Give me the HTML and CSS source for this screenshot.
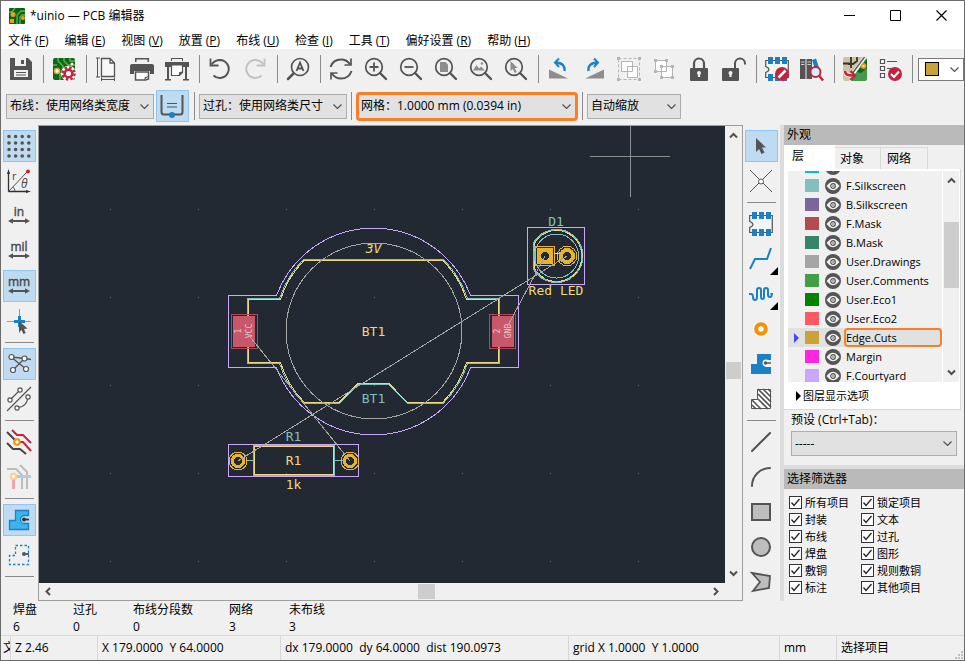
FILE: index.html
```html
<!DOCTYPE html>
<html lang="zh-CN">
<head>
<meta charset="utf-8">
<title>*uinio — PCB 编辑器</title>
<link rel="stylesheet" href="styles.css">
</head>
<body>
<svg class="defs" aria-hidden="true">
  <symbol id="lens" viewBox="0 0 24 24"><circle cx="10" cy="10" r="8.3" fill="none" stroke="#545454" stroke-width="1.7"/><path d="M16 16l6 6" stroke="#545454" stroke-width="2.4" stroke-linecap="round"/></symbol>
  <symbol id="arrows" viewBox="0 0 24 24"><path d="M4 17h16" stroke="#545454" stroke-width="2"/><path d="M1 17l5-2.800v5.600zM23 17l-5-2.800v5.600z" fill="#545454"/></symbol>
  <symbol id="footprint" viewBox="0 0 24 24"><path d="M.7 3.5h22.6v17H.7v-5q3.200-1.200 3.200-3t-3.200-3z" fill="#f4f4f4" stroke="#545454" stroke-width="1.200"/><path d="M3 0h5v7H3zM10 0h5v7h-5zM17 0h5v7h-5zM3 17h5v7H3zM10 17h5v7h-5zM17 17h5v7h-5z" fill="#1a81c4"/></symbol>
  <symbol id="cursor" viewBox="0 0 24 24"><path d="M7 4v14l3-3 2.500 5 3-1.500-2.500-5H17z" fill="#545454"/></symbol>
  <symbol id="eye" viewBox="0 0 16 16"><circle cx="8" cy="8" r="8" fill="#545454"/><path d="M1.500 8Q8 -.5 14.500 8 8 16.500 1.500 8z" fill="#f0f0f0"/><circle cx="8" cy="8" r="2.300" fill="#f0f0f0" stroke="#545454" stroke-width="1.200"/><circle cx="8" cy="8" r=".8" fill="#545454"/></symbol>
  <symbol id="up" viewBox="0 0 9 9"><path d="M1 6.500L4.500 3 8 6.500" fill="none" stroke="#505050" stroke-width="2"/></symbol>
  <symbol id="down" viewBox="0 0 9 9"><path d="M1 2.500L4.500 6 8 2.500" fill="none" stroke="#505050" stroke-width="2"/></symbol>
</svg>
<div class="window">
  <header class="titlebar">
    <svg class="app-icon" viewBox="0 0 16 16"><rect width="16" height="16" rx="1" fill="#09640f"/><path d="M0 4h3l3-4M16 3h-4L8 7v9M16 7h-3l-2 2v7" fill="none" stroke="#64ad54" stroke-width="1.300"/><circle cx="4" cy="6.500" r="2.500" fill="#f29b24"/><path d="M1 11h4v4H1z" fill="#f29b24"/><circle cx="14" cy="10" r="2" fill="#f29b24"/></svg>
    <h1>*uinio — PCB 编辑器</h1>
    <div class="win-controls">
      <button aria-label="最小化"><svg viewBox="0 0 11 11"><path d="M0 5.500h11" stroke="#000"/></svg></button>
      <button aria-label="最大化"><svg viewBox="0 0 11 11"><path d="M.5.5h10v10H.5z" fill="none" stroke="#000"/></svg></button>
      <button aria-label="关闭"><svg viewBox="0 0 11 11"><path d="M.5.5l10 10M10.500.5l-10 10" stroke="#000" stroke-width="1.200"/></svg></button>
    </div>
  </header>
  <nav class="menubar">
    <button>文件 (<u>F</u>)</button><button>编辑 (<u>E</u>)</button><button>视图 (<u>V</u>)</button><button>放置 (<u>P</u>)</button><button>布线 (<u>U</u>)</button><button>检查 (<u>I</u>)</button><button>工具 (<u>T</u>)</button><button>偏好设置 (<u>R</u>)</button><button>帮助 (<u>H</u>)</button>
  </nav>

  <div class="toolbar" role="toolbar">
    <button class="tool" aria-label="保存"><svg viewBox="0 0 24 24"><path d="M1 1h18l4 4v18H1z" fill="#545454"/><path d="M6 1h11v8H6zM5 13h14v7H5z" fill="#f0f0f0"/><path d="M12 3h3v4h-3z" fill="#545454"/><path d="M7 15.500h10M7 18h10" stroke="#545454"/></svg></button>
    <i class="sep"></i>
    <button class="tool" aria-label="电路板设置"><svg viewBox="0 0 24 24"><rect x="1" y="1" width="22" height="22" rx="2" fill="#0a6b12"/><path d="M6 1v3l5 5v5l-3 3v6M12 1v3l4 4h7M1 8h4M18 1v3h5" fill="none" stroke="#5fae56" stroke-width="1.500"/><circle cx="5" cy="14" r="2.500" fill="#fff" stroke="#e8a13c" stroke-width="1.500"/><circle cx="20" cy="7" r="1.500" fill="#fff"/><circle cx="16.500" cy="16.500" r="6.200" fill="none" stroke="#fff" stroke-width="3" /><circle cx="16.500" cy="16.500" r="6" fill="none" stroke="#c4233f" stroke-width="2.500" stroke-dasharray="2.500 2.210"/><circle cx="16.500" cy="16.500" r="3.800" fill="#fff" stroke="#c4233f" stroke-width="2.500"/></svg></button>
    <i class="sep"></i>
    <button class="tool" aria-label="页面设置"><svg viewBox="0 0 24 24"><path d="M6.500 1.500H15l4.500 4.500v13.500h-13zM15 1.500V6h4.500" fill="#f8f8f8" stroke="#545454" stroke-width="1.300"/><path d="M2.500 1v19M1 1h4M1 20h4M6 22.500h14M6.500 20.500v3.500M19.500 20.500v3.500" stroke="#545454" fill="none"/></svg></button>
    <button class="tool" aria-label="打印"><svg viewBox="0 0 24 24"><path d="M5 1h14v4H5zM2 7h20q2 0 2 2v8h-4v-3H4v3H0V9q0-2 2-2z" fill="#545454"/><path d="M5.500 15h13v7l-3 1h-10z" fill="#fff" stroke="#545454" stroke-width="1.500"/><path d="M6.500 2.500h11V5h-11z" fill="#f0f0f0"/><path d="M14 23l1-3 4-1z" fill="#545454"/></svg></button>
    <button class="tool" aria-label="绘图"><svg viewBox="0 0 24 24"><path d="M6 1h12v3H6zM0 5h24v5h-2v13h-2V10H4v13H2V10H0z" fill="#545454"/><path d="M0 22h6v1.500H0zM18 22h6v1.500h-6z" fill="#545454"/><path d="M6.500 8v10.500h8l3-3V8z" fill="#fff" stroke="#545454" stroke-width="1.200"/><path d="M13.500 19l.8-4 4-.5z" fill="#545454"/><path d="M7 2h10v2H7z" fill="#f0f0f0"/></svg></button>
    <i class="sep"></i>
    <button class="tool" aria-label="撤销"><svg viewBox="0 0 24 24"><path d="M3.500 7.500Q7 3 12 3a9 9 0 1 1-6.500 15.500" fill="none" stroke="#545454" stroke-width="2"/><path d="M2.500 1.500v7h8" fill="none" stroke="#545454" stroke-width="1.800"/></svg></button>
    <button class="tool" aria-label="重做"><svg viewBox="0 0 24 24"><path d="M20.500 7.500Q17 3 12 3a9 9 0 1 0 6.500 15.500" fill="none" stroke="#c1c1c1" stroke-width="2"/><path d="M21.500 1.500v7h-8" fill="none" stroke="#c1c1c1" stroke-width="1.800"/></svg></button>
    <i class="sep"></i>
    <button class="tool" aria-label="查找"><svg viewBox="0 0 24 24"><circle cx="14" cy="10" r="8.500" fill="none" stroke="#545454" stroke-width="1.700"/><path d="M7.500 16.500L2 22" stroke="#545454" stroke-width="2.500" stroke-linecap="round"/><path d="M10.500 14L14 5.500l3.500 8.500M11.500 11.500h5" stroke="#545454" stroke-width="1.800" fill="none"/></svg></button>
    <i class="sep"></i>
    <button class="tool" aria-label="刷新"><svg viewBox="0 0 24 24"><path d="M1.500 10Q4 2.500 12 2.500q6 0 9 5M22.500 14Q20 21.500 12 21.500q-6 0-9-5" fill="none" stroke="#545454" stroke-width="2"/><path d="M22 1.500V8h-6.500M2 22.500V16h6.500" fill="none" stroke="#545454" stroke-width="1.700"/></svg></button>
    <button class="tool" aria-label="放大"><svg viewBox="0 0 24 24"><use href="#lens"/><path d="M5.500 10h9M10 5.500v9" stroke="#545454" stroke-width="1.800"/></svg></button>
    <button class="tool" aria-label="缩小"><svg viewBox="0 0 24 24"><use href="#lens"/><path d="M5.500 10h9" stroke="#545454" stroke-width="1.800"/></svg></button>
    <button class="tool" aria-label="缩放到页面"><svg viewBox="0 0 24 24"><use href="#lens"/><path d="M6 5h5.500L14 7.500V15H6z" fill="#8d8d8d"/></svg></button>
    <button class="tool" aria-label="缩放到对象"><svg viewBox="0 0 24 24"><use href="#lens"/><path d="M4 13.500L7.500 8l2.500 3.500L12 9.500l4 4z" fill="#8d8d8d"/><circle cx="13" cy="6.500" r="1.300" fill="#8d8d8d"/></svg></button>
    <button class="tool" aria-label="缩放到选择"><svg viewBox="0 0 24 24"><use href="#lens"/><path d="M6.500 4v10l2.200-2 2 4 2-1-2-4h3z" fill="#8d8d8d"/></svg></button>
    <i class="sep"></i>
    <button class="tool" aria-label="逆时针旋转"><svg viewBox="0 0 24 24"><path d="M2 12.500L21 21.500H2z" fill="#8d8d8d"/><path d="M17.500 14q1-8-9-8.500" fill="none" stroke="#1a81c4" stroke-width="2.300"/><path d="M12 1.500L8 5.500l4 4.500" fill="none" stroke="#1a81c4" stroke-width="2"/></svg></button>
    <button class="tool" aria-label="顺时针旋转"><svg viewBox="0 0 24 24"><path d="M22 12.500L3 21.500h19z" fill="#8d8d8d"/><path d="M6.500 14q-1-8 9-8.500" fill="none" stroke="#1a81c4" stroke-width="2.300"/><path d="M12 1.500l4 4-4 4.500" fill="none" stroke="#1a81c4" stroke-width="2"/></svg></button>
    <button class="tool" aria-label="编组"><svg viewBox="0 0 24 24"><path d="M1.500 1.500h21v21h-21z" fill="none" stroke="#b5b5b5" stroke-dasharray="3 2"/><path d="M4.500 4.500h11v10h-11zM10.500 9.500h10v11h-10z" fill="#fff" stroke="#b5b5b5"/><path d="M0 0h3v3H0zM21 0h3v3h-3zM0 21h3v3H0zM21 21h3v3h-3z" fill="#b5b5b5"/></svg></button>
    <button class="tool" aria-label="取消编组"><svg viewBox="0 0 24 24"><path d="M3.500 3.500h11v11h-11zM9.500 9.500h11v11h-11z" fill="#fff" stroke="#b5b5b5"/><path d="M2 2h3v3H2zM13 2h3v3h-3zM2 13h3v3H2zM8 8h3v3H8zM19 8h3v3h-3zM8 19h3v3H8zM19 19h3v3h-3z" fill="#b5b5b5"/></svg></button>
    <button class="tool" aria-label="锁定"><svg viewBox="0 0 24 24"><path d="M7 12V6.500a5 5 0 0 1 10 0V12" fill="none" stroke="#545454" stroke-width="2.200"/><rect x="3" y="11" width="18" height="13" rx="1" fill="#545454"/><path d="M12 15v5" stroke="#f0f0f0" stroke-width="2.200"/><circle cx="12" cy="16" r="2" fill="#f0f0f0"/></svg></button>
    <button class="tool" aria-label="解锁"><svg viewBox="0 0 24 24"><path d="M13 12V6.500a5 5 0 0 1 10 0v1" fill="none" stroke="#545454" stroke-width="2"/><rect x="0" y="11" width="17" height="13" rx="1" fill="#545454"/><path d="M8.500 15v5" stroke="#f0f0f0" stroke-width="2.200"/><circle cx="8.500" cy="16" r="2" fill="#f0f0f0"/></svg></button>
    <i class="sep"></i>
    <button class="tool" aria-label="封装编辑器"><svg viewBox="0 0 24 24"><use href="#footprint"/><circle cx="17" cy="17" r="7" fill="#c4233f"/><path d="M13.500 20.500l7-7" stroke="#fff" stroke-width="2.500"/></svg></button>
    <button class="tool" aria-label="封装浏览器"><svg viewBox="0 0 24 24"><path d="M0 2h5.500v20H0zM6.500 2H12v20H6.500z" fill="#545454"/><path d="M12 3l4-1.500 4 12-4 2z" fill="#1a81c4"/><path d="M1 5h3.500M1 7.500h3.500M7.500 5H11M7.500 7.500H11" stroke="#ccc"/><circle cx="15.500" cy="15" r="5" fill="#d9edf8" stroke="#c4233f" stroke-width="2"/><path d="M19 18.500l4 5" stroke="#c4233f" stroke-width="2.500"/></svg></button>
    <i class="sep"></i>
    <button class="tool" aria-label="从原理图更新"><svg viewBox="0 0 24 24"><path d="M2 0h18L6 24H2q-2 0-2-2V2q0-2 2-2z" fill="#d0c3a3"/><path d="M21 0q3 0 3 3v19q0 2-2 2H8z" fill="#46994a"/><path d="M14 15L24 2v9l-6 5z" fill="#0b6817"/><path d="M22 0L9 18" stroke="#fff" stroke-width="3.500"/><path d="M21.500 0L9 17" stroke="#545454" stroke-width="1.300"/><path d="M0 6.500h7M8 0v11M5 7h5l4-3V0" fill="none" stroke="#333" stroke-width="1.800"/><circle cx="20.500" cy="9" r="2" fill="#fff" stroke="#ef9818" stroke-width="1.800"/><path d="M2 14q0 5 9 4.500" fill="none" stroke="#f5e9df" stroke-width="4.500"/><path d="M2 14q0 5 9 4.500" fill="none" stroke="#c4233f" stroke-width="2.500"/><path d="M7.500 14l4.500 4.500L7.500 23" fill="none" stroke="#c4233f" stroke-width="2.300"/></svg></button>
    <button class="tool" aria-label="设计规则检查"><svg viewBox="0 0 24 24"><path d="M2.500 2.500h4v4h-4zM2.500 9.500h4v4h-4zM2.500 16.500h4v4h-4z" fill="#fff" stroke="#545454" stroke-width="1.200"/><path d="M9 4.500h10M9 11.500h5" stroke="#545454" stroke-width="1.200"/><circle cx="17" cy="17" r="7" fill="#c4233f"/><path d="M13 17l3 3 5-5.500" fill="none" stroke="#fff" stroke-width="2"/></svg></button>
    <i class="sep"></i>
    <button class="layer-color" aria-label="当前层"><span></span><svg viewBox="0 0 9 9"><path d="M.5 2.500l4 4 4-4" fill="none" stroke="#505050" stroke-width="1.200"/></svg></button>
  </div>

  <div class="toolbar options" role="toolbar">
    <select class="combo wide" aria-label="布线宽度"><option>布线：使用网络类宽度</option></select>
    <button class="tool on" aria-label="自动布线宽度"><svg viewBox="0 0 24 24"><path d="M1.500 1v17q0 2.500 2.500 2.500h16q2.500 0 2.500-2.500V1" fill="none" stroke="#545454" stroke-width="2"/><path d="M7 9.500h10M7 13h10" stroke="#545454" stroke-width="1.200"/><circle cx="12" cy="21" r="3" fill="#1a81c4"/></svg></button>
    <i class="sep"></i>
    <select class="combo wide" aria-label="过孔尺寸"><option>过孔：使用网络类尺寸</option></select>
    <i class="sep"></i>
    <select class="combo grid-combo" aria-label="网格"><option>网格：1.0000 mm (0.0394 in)</option></select>
    <i class="sep"></i>
    <select class="combo narrow" aria-label="缩放"><option>自动缩放</option></select>
  </div>

  <main class="workspace">
    <div class="sidebar" role="toolbar">
      <button class="tool on" aria-label="显示网格"><svg viewBox="0 0 24 24"><path d="M2 2.500h22M2 9h22M2 15.500h22M2 22h22" stroke="#545454" stroke-width="3.600" stroke-linecap="round" stroke-dasharray="0 6.600"/></svg></button>
      <button class="tool" aria-label="极坐标"><svg viewBox="0 0 24 24"><path d="M1.500 22.500V3M1.500 22.500h19" stroke="#303030" stroke-width="1.300"/><path d="M1.500 0L0 5h3zM24 22.500L19 21v3z" fill="#303030"/><path d="M1.500 22.500L20 3M6 18q2 2 2 4" fill="none" stroke="#545454"/><circle cx="21" cy="2.500" r="2" fill="#c4233f"/><text x="5" y="11" class="ico-text">r</text><text x="14" y="19" class="ico-text theta">θ</text></svg></button>
      <button class="tool" aria-label="英寸"><svg viewBox="0 0 24 24"><use href="#arrows"/><text x="12" y="12" class="ico-text unit">in</text></svg></button>
      <button class="tool" aria-label="密耳"><svg viewBox="0 0 24 24"><use href="#arrows"/><text x="12" y="12" class="ico-text unit">mil</text></svg></button>
      <button class="tool on" aria-label="毫米"><svg viewBox="0 0 24 24"><use href="#arrows"/><text x="12" y="12" class="ico-text unit">mm</text></svg></button>
      <button class="tool" aria-label="全屏光标"><svg viewBox="0 0 24 24"><path d="M0 12.500h24M12.500 0v24" stroke="#999"/><path d="M7 12.500h11M12.500 7v11" stroke="#1a81c4" stroke-width="3"/><path d="M12 12v11l2.500-2 2 4 2.200-1-1.700-4 3.500-.5z" fill="#545454"/></svg></button>
      <i class="sep"></i>
      <button class="tool on" aria-label="显示飞线"><svg viewBox="0 0 24 24"><path d="M4 5l14 1.500L24 7.500M4 5l15 12M18 6L6 18" stroke="#545454" stroke-width="1.300"/><g fill="#fff" stroke="#545454" stroke-width="1.200"><circle cx="4.500" cy="5" r="2.500"/><circle cx="17.500" cy="6.500" r="2.500"/><circle cx="6" cy="18" r="2.500"/><circle cx="19" cy="17" r="2.500"/></g></svg></button>
      <button class="tool" aria-label="曲线飞线"><svg viewBox="0 0 24 24"><path d="M24 0L0 24M3 13L13 3M10 21q10-1 11-11" fill="none" stroke="#545454" stroke-width="1.200"/><g fill="#fff" stroke="#545454" stroke-width="1.200"><circle cx="3" cy="13" r="2.100"/><circle cx="13" cy="3" r="2.100"/><circle cx="10" cy="21" r="2.100"/><circle cx="21" cy="10" r="2.100"/></g></svg></button>
      <i class="sep"></i>
      <button class="tool" aria-label="高对比度"><svg viewBox="0 0 24 24"><path d="M0 2l9 9M0 13l6 6h7l6 5" fill="none" stroke="#444" stroke-width="2"/><path d="M5 0l5 5h6l8 8M10 12h6l8 9" fill="none" stroke="#c4233f" stroke-width="2"/><circle cx="10" cy="12" r="2.800" fill="#fff" stroke="#f39200" stroke-width="2"/></svg></button>
      <button class="tool" aria-label="网络高亮"><svg viewBox="0 0 24 24"><path d="M0 4h9l6 6v14M13 0l7 7v17" fill="none" stroke="#bdbdbd" stroke-width="2"/><path d="M7 11.500h17" stroke="#a9cfe8" stroke-width="3"/><path d="M6.500 13v11" stroke="#eba4b1" stroke-width="3"/><circle cx="6.500" cy="11.500" r="2.800" fill="#fff" stroke="#f9cd8e" stroke-width="2"/></svg></button>
      <i class="sep"></i>
      <button class="tool on" aria-label="显示敷铜"><svg viewBox="0 0 24 24"><path d="M8.500 2.500h13v5h-4a3.800 3.800 0 0 0 0 8h4v6h-19v-9h6z" fill="#3cb3ea" stroke="#1a81c4" stroke-width="1.300"/><path d="M16 11.500h6" stroke="#333" stroke-width="1.800"/><circle cx="17" cy="11.500" r="2" fill="#333"/></svg></button>
      <button class="tool" aria-label="敷铜轮廓"><svg viewBox="0 0 24 24"><path d="M8.500 2.500h13v19h-19v-9h6z" fill="none" stroke="#1a81c4" stroke-width="1.300" stroke-dasharray="2.500 2"/><path d="M16 11h6" stroke="#545454" stroke-width="1.800"/><circle cx="17" cy="11" r="2" fill="#545454"/></svg></button>
      <i class="sep"></i>
    </div>

    <div class="viewport">
      <svg class="board" viewBox="39 126 686 457" preserveAspectRatio="xMidYMid slice">
        <defs><pattern id="dots" x="22" y="121" width="88" height="88" patternUnits="userSpaceOnUse"><path d="M0 0h1v1H0z" fill="#666c74"/></pattern></defs>
        <rect x="39" y="126" width="686" height="457" fill="#222932"/>
        <rect x="39" y="126" width="686" height="457" fill="url(#dots)"/>
        <path d="M590 156.500h80M630.500 126v71" stroke="#8b8f92"/>
        <g fill="none">
          <path d="M228.500 295.500H276.500A103.500 103.500 0 0 1 470.500 295.500H518.500V367.500H470.500A103.500 103.500 0 0 1 276.500 367.500H228.500z" stroke="#c9a7fb"/>
          <path d="M303.500 259.500H443.500A100 100 0 0 1 467.500 298.500H499.500V363.500H467.500A100 100 0 0 1 443.500 403H407L388.500 384H358.500L340 403H303.500A100 100 0 0 1 279.500 363.500H247.500V298.500H279.500A100 100 0 0 1 303.500 259.500z" stroke="#7fc0bd"/>
          <path d="M304 260.500H443A99 99 0 0 1 466.500 299.500H498.500V362.500H466.500A99 99 0 0 1 443 402H407L388.500 383H358.500L339.500 402H304A99 99 0 0 1 280.500 362.500H248.500V299.500H280.500A99 99 0 0 1 304 260.500z" stroke="#f0d878"/>
          <circle cx="374" cy="331" r="88" stroke="#a6a6a6"/>
          <path d="M369 331.500h10" stroke="#00007a"/>
        </g>
        <g stroke="#a94c51" fill="none"><rect x="231.500" y="314.500" width="26" height="34"/><rect x="489.500" y="314.500" width="26" height="34"/></g>
        <g fill="#c9576c"><rect x="233" y="316" width="22" height="31"/><rect x="492" y="316" width="22" height="31"/></g>
        <g class="pad-text">
          <text transform="translate(241 331) rotate(-90)">1</text><text transform="translate(252 331) rotate(-90)">VCC</text>
          <text transform="translate(500 331) rotate(-90)">2</text><text transform="translate(511 331) rotate(-90)">GND</text>
        </g>
        <g fill="none">
          <rect x="527.500" y="227.500" width="57" height="57" stroke="#c9a7fb"/>
          <path d="M533.500 243.500A26 26 0 1 1 533.500 268.500z" stroke="#7fc0bd" stroke-width="2"/>
          <path d="M534.500 243.500A25.500 25.500 0 1 1 534.500 268.500z" stroke="#f0d878" stroke-dasharray="9 3"/>
          <circle cx="556.500" cy="256" r="22" stroke="#7fc0bd"/>
          <rect x="535.500" y="246.500" width="19" height="19" stroke="#e5b42c"/>
          <circle cx="567" cy="256" r="9.700" stroke="#e5b42c"/>
          <path d="M554 254l5-1v7" stroke="#f0d878"/>
        </g>
        <rect x="537" y="248" width="16" height="16" fill="#e5b42c"/><circle cx="567" cy="256" r="8" fill="#e5b42c"/>
        <g fill="#222932" stroke="#222932"><circle cx="545" cy="256" r="3.800"/><circle cx="567" cy="256" r="3.800"/></g>
        <g fill="none">
          <rect x="228.500" y="444.500" width="130" height="32" stroke="#c9a7fb"/>
          <path d="M246 460.500h8M335 460.500h8" stroke="#7fc0bd"/>
          <rect x="253.500" y="445.500" width="81" height="30" stroke="#7fc0bd"/>
          <rect x="254.500" y="446.500" width="79" height="28" stroke="#f0d878"/>
          <g stroke="#e5b42c"><circle cx="238" cy="461" r="9"/><circle cx="350" cy="461" r="9"/><g stroke-width="3"><circle cx="238" cy="461" r="5.700"/><circle cx="350" cy="461" r="5.700"/></g></g>
          <path d="M567 256L238 461M545 256L505 331M247 333L350 461" stroke="#a6a6a6"/>
        </g>
        <g class="silk">
          <text x="373.500" y="253" class="fab slanted">3V</text>
          <text x="373.500" y="336" class="fab">BT1</text>
          <text x="373.500" y="403">BT1</text>
          <text x="556" y="226">D1</text>
          <text x="556" y="295" class="fab">Red LED</text>
          <text x="293.500" y="441">R1</text>
          <text x="293.500" y="465" class="fab">R1</text>
          <text x="293.500" y="489" class="fab">1k</text>
        </g>
      </svg>
      <div class="vscroll"><svg class="chev"><use href="#up"/></svg><span class="track"><span class="thumb"></span></span><svg class="chev"><use href="#down"/></svg></div>
      <div class="hscroll"><svg class="chev" viewBox="0 0 9 9"><path d="M6 1L2.500 4.500 6 8" fill="none" stroke="#505050" stroke-width="2"/></svg><span class="track"><span class="thumb"></span></span><svg class="chev" viewBox="0 0 9 9"><path d="M3 1l3.500 3.500L3 8" fill="none" stroke="#505050" stroke-width="2"/></svg></div>
    </div>

    <div class="sidebar" role="toolbar">
      <button class="tool on" aria-label="选择"><svg viewBox="0 0 24 24"><use href="#cursor"/></svg></button>
      <button class="tool" aria-label="局部飞线"><svg viewBox="0 0 24 24"><path d="M1 1l22 22M23 1L1 23" stroke="#545454"/><circle cx="12" cy="12.500" r="2.500" fill="#fff" stroke="#545454"/></svg></button>
      <i class="sep"></i>
      <button class="tool" aria-label="添加封装"><svg viewBox="0 0 24 24"><use href="#footprint"/></svg></button>
      <button class="tool more" aria-label="布线"><svg viewBox="0 0 24 24"><path d="M1 22l5-10h12l4-11" fill="none" stroke="#1a81c4" stroke-width="2"/></svg></button>
      <button class="tool more" aria-label="调整长度"><svg viewBox="0 0 24 24"><path d="M0 12h2q2 0 2 3t2 3 2-3V8q0-2 2-2t2 2v7q0 2 1.500 2t1.500-2V8q0-2 2-2t2 2v5q0 2 2 2t1.500-3H24" fill="none" stroke="#1a81c4" stroke-width="2"/></svg></button>
      <button class="tool" aria-label="过孔"><svg viewBox="0 0 24 24"><circle cx="12" cy="12" r="4.800" fill="#fff" stroke="#f39200" stroke-width="4"/></svg></button>
      <button class="tool" aria-label="敷铜"><svg viewBox="0 0 24 24"><path d="M8 2h14v6h-4a3.500 3.500 0 0 0 0 7h4v7H2V12h6z" fill="#1a81c4"/><circle cx="17" cy="11" r="3.500" fill="#fff"/><circle cx="16.500" cy="11" r="1.700" fill="#545454"/><path d="M17 11h5" stroke="#545454" stroke-width="1.500"/></svg></button>
      <button class="tool" aria-label="规则区域"><svg viewBox="0 0 24 24"><path d="M8.500 2.500h13v19h-19v-9h6z" fill="#fff" stroke="#545454"/><path d="M9 2l13 13M14 2l8 8M9 7l13 13M9 12l10 10M3 13l9 9M3 18l4 4M19 2l3 3" stroke="#545454" stroke-width="1.700"/></svg></button>
      <i class="sep"></i>
      <button class="tool" aria-label="直线"><svg viewBox="0 0 24 24"><path d="M3 21L21 3" stroke="#545454" stroke-width="2" stroke-linecap="round"/></svg></button>
      <button class="tool" aria-label="圆弧"><svg viewBox="0 0 24 24"><path d="M3 21A18 18 0 0 1 21 3" fill="none" stroke="#545454" stroke-width="2" stroke-linecap="round"/></svg></button>
      <button class="tool" aria-label="矩形"><svg viewBox="0 0 24 24"><path d="M3 4h18v16H3z" fill="#bdbdbd" stroke="#545454" stroke-width="2"/></svg></button>
      <button class="tool" aria-label="圆"><svg viewBox="0 0 24 24"><circle cx="12" cy="12" r="9" fill="#bdbdbd" stroke="#545454" stroke-width="2"/></svg></button>
      <button class="tool" aria-label="多边形"><svg viewBox="0 0 24 24"><path d="M3 3l18 3-1 12-16 3 7-9z" fill="#bdbdbd" stroke="#545454" stroke-width="1.800"/></svg></button>
    </div>

    <aside class="panels">
      <h2>外观</h2>
      <div class="tabs" role="tablist"><button role="tab" class="active">层</button><button role="tab">对象</button><button role="tab">网络</button></div>
      <section class="layers">
        <div class="list-box">
          <ul>
            <li><i class="mark"></i><span class="swatch paste"></span><button aria-label="可见性"><svg><use href="#eye"/></svg></button></li>
            <li><i class="mark"></i><span class="swatch fsilk"></span><button aria-label="可见性"><svg><use href="#eye"/></svg></button><span>F.Silkscreen</span></li>
            <li><i class="mark"></i><span class="swatch bsilk"></span><button aria-label="可见性"><svg><use href="#eye"/></svg></button><span>B.Silkscreen</span></li>
            <li><i class="mark"></i><span class="swatch fmask"></span><button aria-label="可见性"><svg><use href="#eye"/></svg></button><span>F.Mask</span></li>
            <li><i class="mark"></i><span class="swatch bmask"></span><button aria-label="可见性"><svg><use href="#eye"/></svg></button><span>B.Mask</span></li>
            <li><i class="mark"></i><span class="swatch drawings"></span><button aria-label="可见性"><svg><use href="#eye"/></svg></button><span>User.Drawings</span></li>
            <li><i class="mark"></i><span class="swatch comments"></span><button aria-label="可见性"><svg><use href="#eye"/></svg></button><span>User.Comments</span></li>
            <li><i class="mark"></i><span class="swatch eco1"></span><button aria-label="可见性"><svg><use href="#eye"/></svg></button><span>User.Eco1</span></li>
            <li><i class="mark"></i><span class="swatch eco2"></span><button aria-label="可见性"><svg><use href="#eye"/></svg></button><span>User.Eco2</span></li>
            <li class="current"><i class="mark"></i><span class="swatch edge"></span><button aria-label="可见性"><svg><use href="#eye"/></svg></button><span class="name">Edge.Cuts</span></li>
            <li><i class="mark"></i><span class="swatch margin"></span><button aria-label="可见性"><svg><use href="#eye"/></svg></button><span>Margin</span></li>
            <li><i class="mark"></i><span class="swatch court"></span><button aria-label="可见性"><svg><use href="#eye"/></svg></button><span>F.Courtyard</span></li>
          </ul>
          <div class="vscroll"><svg class="chev"><use href="#up"/></svg><span class="track"><span class="thumb"></span></span><svg class="chev"><use href="#down"/></svg></div>
        </div>
        <button class="disclosure"><i></i>图层显示选项</button>
      </section>
      <div class="preset"><label for="preset">预设 (Ctrl+Tab)：</label><select id="preset" class="combo"><option>-----</option></select></div>
      <h2>选择筛选器</h2>
      <div class="filters">
        <label><input type="checkbox" checked>所有项目</label><label><input type="checkbox" checked>锁定项目</label>
        <label><input type="checkbox" checked>封装</label><label><input type="checkbox" checked>文本</label>
        <label><input type="checkbox" checked>布线</label><label><input type="checkbox" checked>过孔</label>
        <label><input type="checkbox" checked>焊盘</label><label><input type="checkbox" checked>图形</label>
        <label><input type="checkbox" checked>敷铜</label><label><input type="checkbox" checked>规则敷铜</label>
        <label><input type="checkbox" checked>标注</label><label><input type="checkbox" checked>其他项目</label>
      </div>
    </aside>
  </main>

  <dl class="info">
    <div><dt>焊盘</dt><dd>6</dd></div><div><dt>过孔</dt><dd>0</dd></div><div><dt>布线分段数</dt><dd>0</dd></div><div><dt>网络</dt><dd>3</dd></div><div><dt>未布线</dt><dd>3</dd></div>
  </dl>
  <footer class="status">
    <span class="file">文</span><span>Z 2.46</span><span>X 179.0000&nbsp; Y 64.0000</span><span>dx 179.0000&nbsp; dy 64.0000&nbsp; dist 190.0973</span><span>grid X 1.0000&nbsp; Y 1.0000</span><span>mm</span><span>选择项目</span>
    <svg class="grip" viewBox="0 0 9 9"><path d="M6 0h2v2H6zM3 3h2v2H3zM6 3h2v2H6zM0 6h2v2H0zM3 6h2v2H3zM6 6h2v2H6z" fill="#bfbfbf"/></svg>
  </footer>
</div>
</body>
</html>
```
FILE: styles.css
```css
* { box-sizing: border-box; }
body { margin: 0; font: 12px/16px "Open Sans", "Noto Sans CJK SC", sans-serif; color: #000; }
button, select, input { font: inherit; color: inherit; margin: 0; }
button { border: 0; padding: 0; background: none; }
svg { display: block; flex: none; }
h1, h2, dl, dd, ul { margin: 0; padding: 0; font: inherit; }
.defs { position: absolute; width: 0; height: 0; }

.window { display: flex; flex-direction: column; height: 100vh; min-height: 640px; border: 1px solid #6b6b6b; background: #f0f0f0; overflow: hidden; }

.titlebar { display: flex; align-items: center; height: 29px; padding-left: 8px; background: #fff; }
.titlebar h1 { flex: 1; margin-left: 5px; }
.app-icon { width: 16px; height: 16px; }
.win-controls { display: flex; }
.win-controls button { display: grid; place-items: center; width: 46px; height: 28px; }
.win-controls svg { width: 11px; height: 11px; }
.menubar { display: flex; height: 19px; background: #fff; }
.menubar button { padding: 0 9px 0 7px; line-height: 22px; white-space: nowrap; }

.toolbar { display: flex; align-items: center; flex: none; height: 40px; padding-left: 3px; }
.tool { display: grid; align-items: center; justify-content: start; flex: none; width: 33px; height: 32px; margin: 0 1px; padding-left: 3px; border: 1px solid transparent; position: relative; }
.tool svg { width: 24px; height: 24px; overflow: visible; }
.tool.on { background: #bfdbf1; border-color: #91c4ef; }
.sep { flex: none; display: block; width: 8px; height: 28px; background: linear-gradient(#8a8a8a, #8a8a8a) center / 1px 100% no-repeat; }
.layer-color { display: flex; align-items: center; justify-content: space-between; width: 46px; height: 23px; margin-left: 2px; padding: 0 4px 0 6px; border: 1px solid #7a7a7a; background: #fff; }
.layer-color span { width: 14px; height: 14px; border: 1px solid #000; background: #c9a338; }
.layer-color svg { width: 9px; height: 9px; }
.options { height: 36px; padding: 0 0 2px 5px; }
.options .tool { margin-left: 2px; }
.combo { appearance: none; height: 25px; padding: 0 20px 0 3px; border: 1px solid #adadad; border-radius: 0; background: #e1e1e1 url("data:image/svg+xml,%3Csvg xmlns='http://www.w3.org/2000/svg' width='9' height='9'%3E%3Cpath d='M.5 2.500l4 4 4-4' fill='none' stroke='%23505050' stroke-width='1.200'/%3E%3C/svg%3E") right 4px center no-repeat; }
.options .sep + .combo { margin-left: 1px; }
.wide { width: 148px; }
.narrow { width: 94px; }
.options .combo.grid-combo { width: 222px; height: 29px; border: 3px solid #fb7d24; border-radius: 4px; padding-left: 2px; }

.workspace { display: flex; flex: 1; min-height: 0; }
.sidebar { display: flex; flex-direction: column; align-items: center; flex: none; width: 37px; padding-top: 3px; }
.sidebar .tool { margin: 2px 0 1px; }
.sidebar .sep { width: 29px; height: 8px; background: linear-gradient(#8a8a8a, #8a8a8a) center / 100% 1px no-repeat; }
.more::after { content: ""; position: absolute; right: -1px; bottom: -1px; border: 4px solid; border-color: transparent #000 #000 transparent; }
.ico-text { font: 11px "Open Sans", sans-serif; fill: #484848; }
.ico-text.theta { font-style: italic; font-size: 12px; }
.ico-text.unit { font-size: 12px; text-anchor: middle; stroke: #484848; stroke-width: .4px; }

.viewport { flex: 1; min-width: 0; display: grid; grid-template: minmax(0, 1fr) 17px / minmax(0, 1fr) 17px; border: 1px solid #9c9f9c; }
.board { width: 100%; height: 100%; shape-rendering: crispEdges; }
.silk text { font: 13px "DejaVu Sans Mono", monospace; text-anchor: middle; fill: #7fc0bd; }
.silk .fab { fill: #f0d878; }
.silk .slanted { font-style: italic; }
.pad-text text { font: 8px "DejaVu Sans Mono", monospace; text-anchor: middle; fill: #f0c9cc; }
.vscroll, .hscroll { display: flex; align-items: center; background: #f0f0f0; }
.vscroll { flex-direction: column; padding: 5px 0; }
.hscroll { padding: 0 5px; }
.chev { width: 9px; height: 9px; }
.track { flex: 1; display: flex; }
.vscroll .track { flex-direction: column; width: 15px; }
.thumb { background: #cdcdcd; }
.viewport .vscroll .thumb { height: 17px; margin-top: 222px; }
.hscroll .thumb { width: 17px; height: 15px; margin-left: 365px; }

.panels { flex: none; width: 184px; border-left: 4px solid #dcdcdc; display: flex; flex-direction: column; }
.panels h2 { flex: none; height: 20px; padding-left: 3px; line-height: 20px; background: #bababa; }
.tabs { display: flex; align-items: flex-end; flex: none; height: 24px; }
.tabs button { width: 47px; height: 22px; border: 1px solid #d9d9d9; border-width: 1px 1px 0 0; text-align: left; padding-left: 6px; }
.tabs .active { width: 51px; height: 24px; background: #fff; padding: 0 0 2px 8px; border: 0; }
.tabs .active + button { width: 46px; padding-left: 5px; }
.layers { flex: none; margin-right: 3px; padding: 2px 1px 0 4px; background: #fff; border: 1px solid #d9d9d9; border-width: 0 1px 1px 0; font-size: 11px; }
.list-box { display: flex; height: 211px; gap: 1px; overflow: hidden; }
.layers ul { flex: 1; margin-top: -14px; list-style: none; }
.layers li { display: flex; align-items: center; height: 19px; background: #f0f0f0; }
.layers li span { white-space: nowrap; }
.layers li button { margin: 0 5px 0 6px; }
.layers li svg { width: 16px; height: 16px; }
.mark { width: 17px; height: 10px; flex: none; }
.current .mark::before { content: ""; display: block; width: 0; margin-left: 6px; border: 5px solid transparent; border-left-color: #3f48ff; border-right: 0; }
.layers .current { background: #e1e1e1; }
.current .name { flex: 1; height: 19px; line-height: 15px; border: 2px solid #fb7d24; border-radius: 4px; margin-left: -2px; }
.swatch { width: 14px; height: 13px; flex: none; }
.paste { background: #00c2c2; } .fsilk { background: #84bfbf; } .bsilk { background: #7b669b; }
.fmask { background: #b44b4f; } .bmask { background: #36846c; } .drawings { background: #a5a5a5; }
.comments { background: #41a044; } .eco1 { background: #008400; } .eco2 { background: #ff5964; }
.edge { background: #c9a338; } .margin { background: #ff26e2; } .court { background: #c9a7fb; }
.list-box .vscroll { width: 16px; }
.list-box .thumb { height: 66px; margin-top: 37px; }
.disclosure { display: flex; align-items: center; height: 27px; padding-left: 8px; gap: 2px; }
.disclosure i { border: 5px solid transparent; border-left-color: #000; border-right: 0; }
.preset { display: flex; flex-direction: column; flex: none; gap: 3px; margin-top: 2px; padding: 0 7px 9px 7px; border-bottom: 4px solid #dcdcdc; }
.filters { display: grid; grid-template-columns: 72px 1fr; grid-auto-rows: 17px; padding: 5px 0 0 5px; font-size: 11px; }
.filters label { display: flex; align-items: center; gap: 3px; white-space: nowrap; }
.filters input { appearance: none; width: 13px; height: 13px; border: 1px solid #333; background: #fff; }
.filters input:checked { background: #fff url("data:image/svg+xml,%3Csvg xmlns='http://www.w3.org/2000/svg' width='11' height='11'%3E%3Cpath d='M1.500 5.500l2.500 3 5.500-6.500' fill='none' stroke='%23222' stroke-width='1.300'/%3E%3C/svg%3E") center no-repeat; }

.info { display: flex; flex: none; gap: 36px; height: 34px; padding-left: 12px; line-height: 17px; }
.info div { min-width: 24px; }
.status { display: grid; grid-template-columns: 9px 87px 183px 288px 211px 57px 1fr 9px; flex: none; height: 25px; border-top: 1px solid #d7d7d7; line-height: 24px; white-space: nowrap; }
.status span { padding-left: 4px; border-left: 1px solid #d7d7d7; overflow: hidden; }
.status .file { padding-left: 2px; border: 0; }
.grip { width: 9px; height: 9px; align-self: end; }
```
